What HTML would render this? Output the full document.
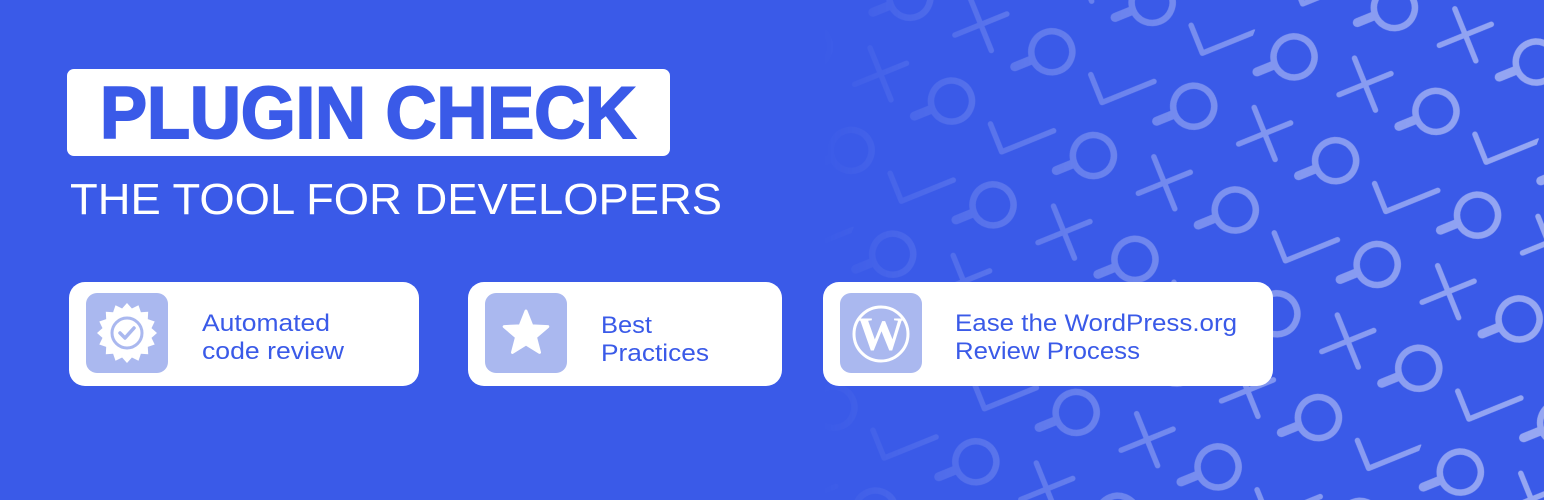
<!DOCTYPE html>
<html><head><meta charset="utf-8"><style>
html,body{margin:0;padding:0;background:#3a5ae8;}
svg{display:block;}
</style></head><body>
<svg width="1544" height="500" viewBox="0 0 1544 500" xmlns="http://www.w3.org/2000/svg">
<defs>
<g id="mag0"><circle cx="0" cy="0" r="20.5" fill="none" stroke="#fff" stroke-width="6.5"/><line x1="-23" y1="0" x2="-40" y2="0" stroke="#fff" stroke-width="9" stroke-linecap="round"/></g>
<g id="ex0" stroke="#fff" stroke-width="5.5" stroke-linecap="round"><line x1="-28" y1="0" x2="28" y2="0"/><line x1="0" y1="-28" x2="0" y2="28"/></g>
<g id="chk0"><polyline points="-20,-16 -20,14 36,14" fill="none" stroke="#fff" stroke-width="5.5" stroke-linecap="round" stroke-linejoin="round"/></g>
<g id="mag" transform="rotate(-43)"><use href="#mag0"/></g>
<g id="ex" transform="rotate(-43)"><use href="#ex0"/></g>
<g id="chk" transform="rotate(-43)"><use href="#chk0" transform="translate(-8,0)"/></g>
<pattern id="pat" patternUnits="userSpaceOnUse" width="304" height="328" x="1182.5" y="-451.6" patternTransform="rotate(21)">
  <use href="#mag" x="46" y="41"/><use href="#ex" x="122" y="41"/><use href="#mag" x="198" y="41"/><use href="#chk" x="274" y="41"/>
  <use href="#mag" x="274" y="123"/><use href="#ex" x="46" y="123"/><use href="#mag" x="122" y="123"/><use href="#chk" x="198" y="123"/>
  <use href="#mag" x="198" y="205"/><use href="#ex" x="274" y="205"/><use href="#mag" x="46" y="205"/><use href="#chk" x="122" y="205"/>
  <use href="#mag" x="122" y="287"/><use href="#ex" x="198" y="287"/><use href="#mag" x="274" y="287"/><use href="#chk" x="46" y="287"/>
</pattern>
<linearGradient id="fade" x1="820" y1="0" x2="1544" y2="0" gradientUnits="userSpaceOnUse">
  <stop offset="0" stop-color="#fff" stop-opacity="0"/>
  <stop offset="0.25" stop-color="#fff" stop-opacity="0.35"/>
  <stop offset="0.6" stop-color="#fff" stop-opacity="0.75"/>
  <stop offset="1" stop-color="#fff" stop-opacity="1"/>
</linearGradient>
<mask id="m" maskUnits="userSpaceOnUse" x="0" y="0" width="1544" height="500"><rect x="0" y="0" width="1544" height="500" fill="url(#fade)"/></mask>
</defs>
<rect width="1544" height="500" fill="#3a5ae8"/>
<rect width="1544" height="500" fill="url(#pat)" opacity="0.47" mask="url(#m)"/>

<rect x="67" y="69" width="603" height="87" rx="7" fill="#fff"/>
<text x="100" y="138" font-family="Liberation Sans, sans-serif" font-weight="bold" font-size="73" fill="#3a5ae8" stroke="#3a5ae8" stroke-width="2" textLength="536" lengthAdjust="spacingAndGlyphs">PLUGIN CHECK</text>
<text x="70" y="214" font-family="Liberation Sans, sans-serif" font-size="44" fill="#fff" textLength="652" lengthAdjust="spacingAndGlyphs">THE TOOL FOR DEVELOPERS</text>

<rect x="69" y="282" width="350" height="104" rx="16" fill="#fff"/>
<rect x="86" y="293" width="82" height="80" rx="11" fill="#aab8ef"/>
<polygon fill="#fff" points="157,333 151.5,328.1 154.7,321.5 147.8,319.1 148.2,311.8 140.9,312.2 138.5,305.3 131.9,308.5 127,303 122.1,308.5 115.5,305.3 113.1,312.2 105.8,311.8 106.2,319.1 99.3,321.5 102.5,328.1 97,333 102.5,337.9 99.3,344.5 106.2,346.9 105.8,354.2 113.1,353.8 115.5,360.7 122.1,357.5 127,363 131.9,357.5 138.5,360.7 140.9,353.8 148.2,354.2 147.8,346.9 154.7,344.5 151.5,337.9"/>
<circle cx="127" cy="333" r="15" fill="none" stroke="#aab8ef" stroke-width="3"/>
<polyline points="120,333 125,338 134,328" fill="none" stroke="#aab8ef" stroke-width="3.5" stroke-linecap="round" stroke-linejoin="round"/>
<g font-family="Liberation Sans, sans-serif" font-size="24" fill="#3a5ae8">
<text x="202" y="331" textLength="128" lengthAdjust="spacingAndGlyphs">Automated</text>
<text x="202" y="359" textLength="142" lengthAdjust="spacingAndGlyphs">code review</text>
</g>

<rect x="468" y="282" width="314" height="104" rx="16" fill="#fff"/>
<rect x="485" y="293" width="82" height="80" rx="11" fill="#aab8ef"/>
<polygon fill="#fff" stroke="#fff" stroke-width="3" stroke-linejoin="round" points="526,311 531.9,325.9 547.8,326.6 535.5,337.1 539.5,352.4 526,344 512.5,352.4 516.5,337.1 504.2,326.6 520.1,325.9"/>
<g font-family="Liberation Sans, sans-serif" font-size="24" fill="#3a5ae8">
<text x="601" y="333" textLength="51" lengthAdjust="spacingAndGlyphs">Best</text>
<text x="601" y="361" textLength="108" lengthAdjust="spacingAndGlyphs">Practices</text>
</g>

<rect x="823" y="282" width="450" height="104" rx="16" fill="#fff"/>
<rect x="840" y="293" width="82" height="80" rx="11" fill="#aab8ef"/>
<circle cx="881" cy="334" r="27" fill="none" stroke="#fff" stroke-width="3"/>
<text x="881" y="350" text-anchor="middle" font-family="Liberation Serif, serif" font-weight="bold" font-size="48" fill="#fff">W</text>
<g font-family="Liberation Sans, sans-serif" font-size="24" fill="#3a5ae8">
<text x="955" y="331" textLength="282" lengthAdjust="spacingAndGlyphs">Ease the WordPress.org</text>
<text x="955" y="359" textLength="185" lengthAdjust="spacingAndGlyphs">Review Process</text>
</g>
</svg>
</body></html>
